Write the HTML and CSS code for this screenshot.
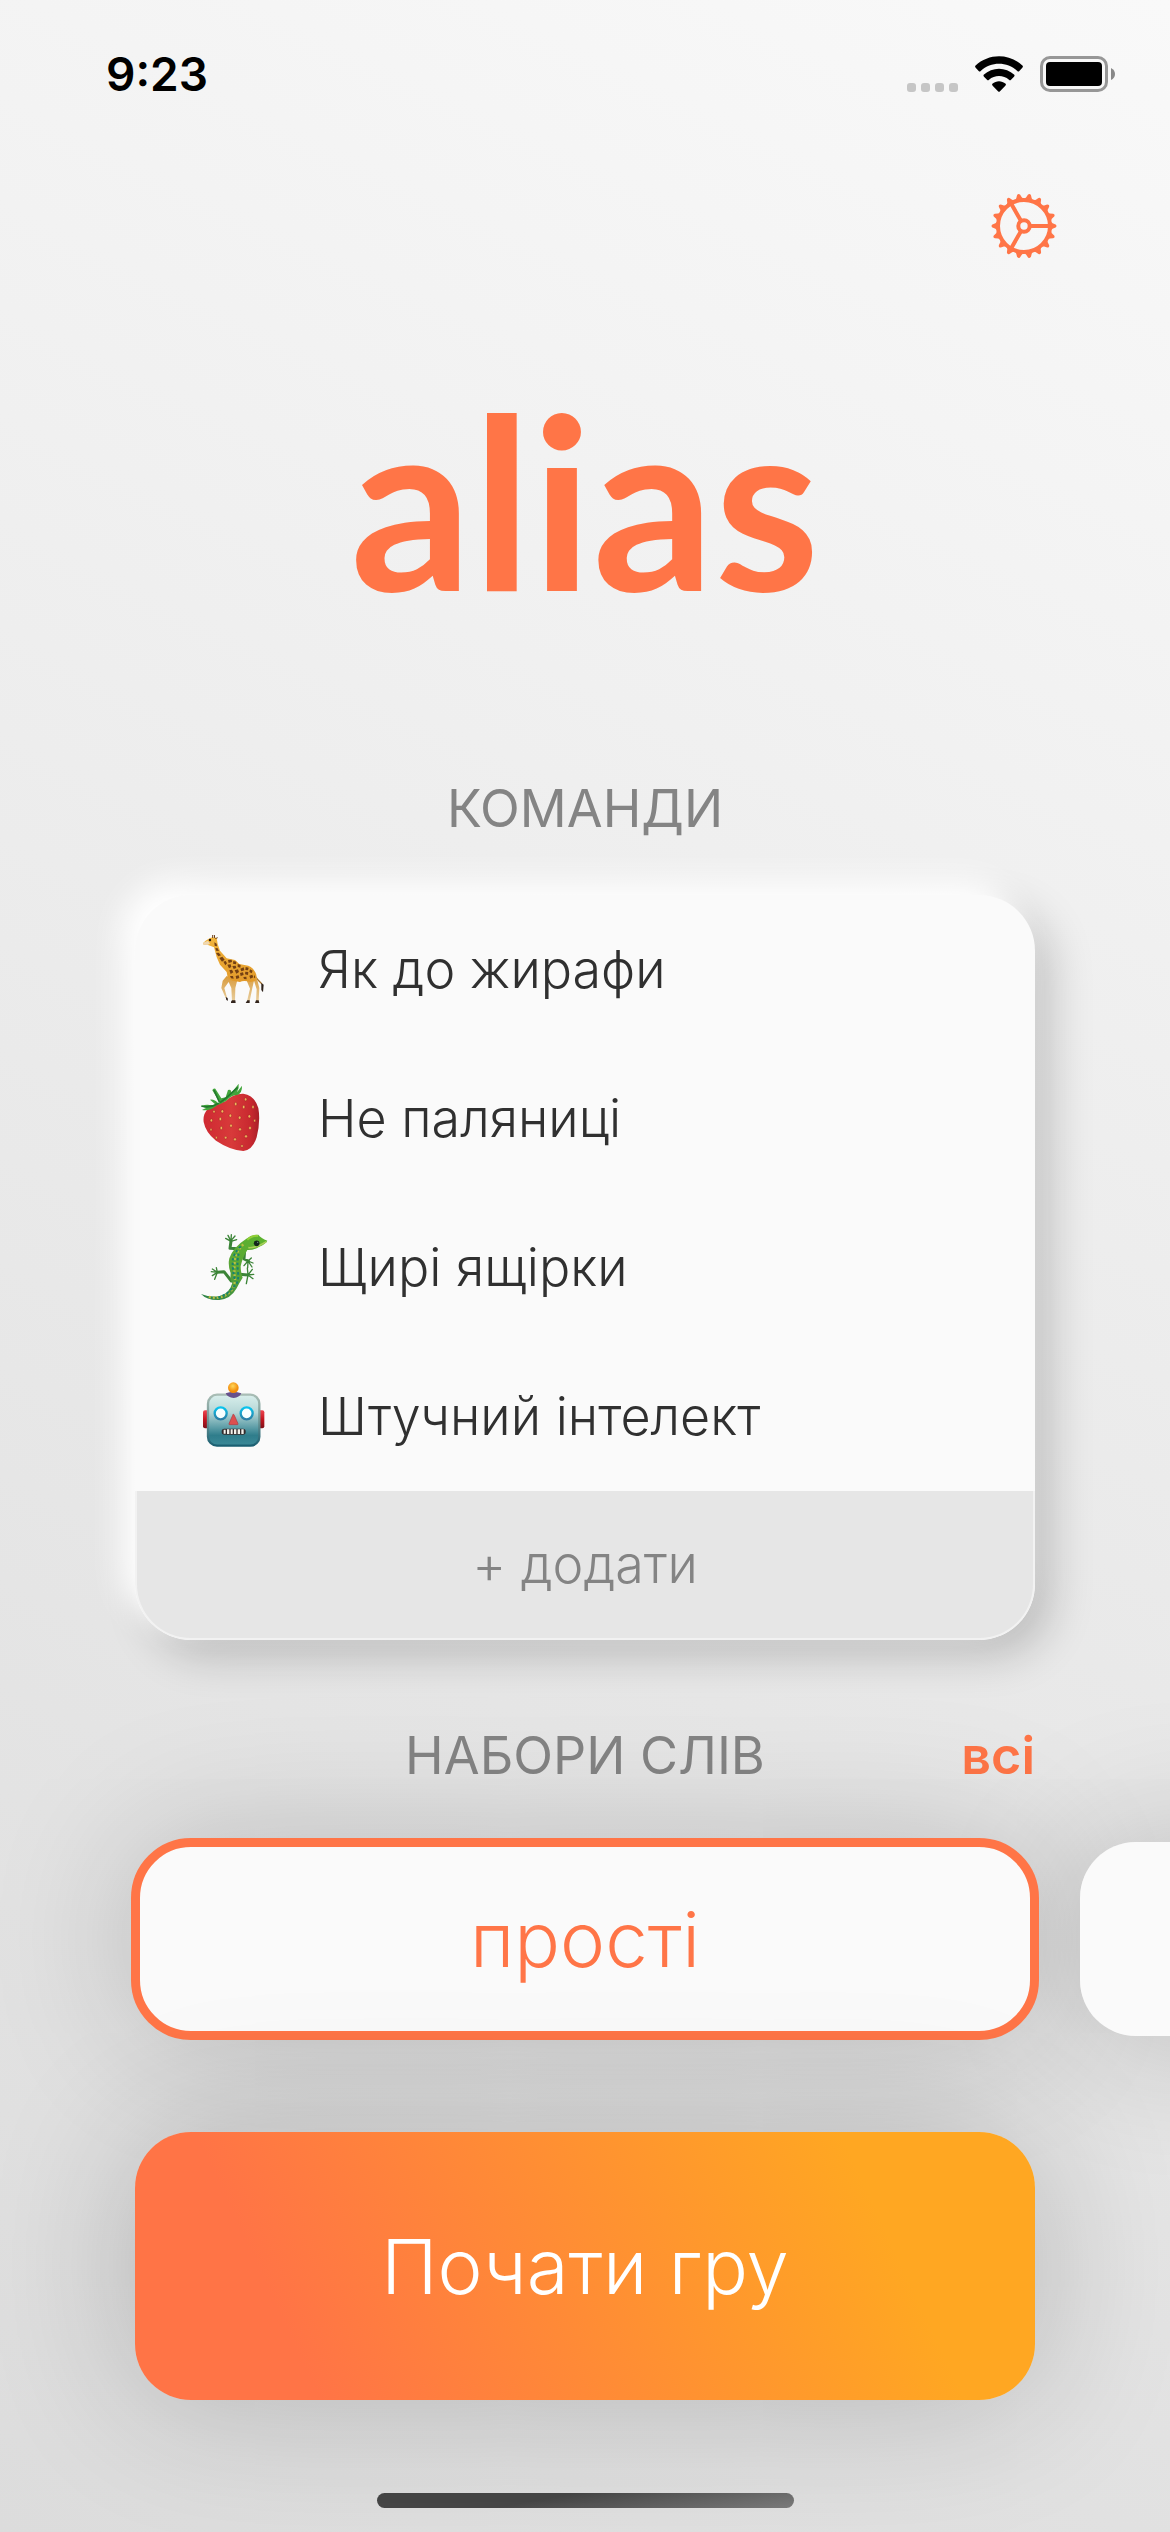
FILE: index.html
```html
<!DOCTYPE html>
<html lang="uk">
<head>
<meta charset="utf-8">
<meta name="viewport" content="width=device-width, initial-scale=1">
<title>alias</title>
<link rel="stylesheet" href="styles.css">
</head>
<body>
<div class="screen">
  <div class="status">
    <span class="time">9:23</span>
    <div class="indicators">
      <svg width="51" height="36" viewBox="0 0 51 36" fill="#c6c6c6" aria-hidden="true">
        <rect x="0" y="27" width="9" height="9" rx="3"/><rect x="14" y="27" width="9" height="9" rx="3"/><rect x="28" y="27" width="9" height="9" rx="3"/><rect x="42" y="27" width="9" height="9" rx="3"/>
      </svg>
      <svg width="48" height="36" viewBox="0 0 144 108" aria-hidden="true">
        <path d="M1 29Q-1 32 2 35L11 45Q14 48 17 45C48 16 96 16 127 45Q130 48 133 45L142 35Q145 32 143 29C103-9 41-9 1 29Z"/>
        <path d="M26 56Q24 59 27 62L36 71Q39 74 42 71C59 56 85 56 102 71Q105 74 108 71L117 62Q120 59 118 56C92 32 52 32 26 56Z"/>
        <path d="M52 83Q50 86 53 89L69 106Q72 109 75 106L91 89Q94 86 92 83C80 73 64 73 52 83Z"/>
      </svg>
      <svg width="75" height="36" viewBox="0 0 75 36" aria-hidden="true">
        <rect x="1.5" y="1.5" width="65" height="33" rx="8.5" fill="none" stroke="#979797" stroke-width="3"/>
        <rect x="6" y="6" width="56" height="24" rx="4"/>
        <path d="M71 12Q75 14 75 18T71 24Z" fill="#888"/>
      </svg>
    </div>
  </div>

  <header class="toolbar">
    <button class="settings" type="button" aria-label="Налаштування">
      <svg width="66" height="66" viewBox="-33 -33 66 66" fill="none" stroke="#ff7547" stroke-width="4" aria-hidden="true">
        <defs><path id="tooth" d="M27 -4.2L28.6 -2.8L31.6 -1.5Q33.4 0 31.6 1.5L28.6 2.8L27 4.2Z" fill="#ff7547" stroke="none"/></defs>
        <circle r="26"/><circle r="5.7"/>
        <path d="M7 0H25M-3.5 -6L-12.5 -21.7M-3.5 6L-12.5 21.7"/>
        <use href="#tooth"/><use href="#tooth" transform="rotate(20)"/><use href="#tooth" transform="rotate(40)"/><use href="#tooth" transform="rotate(60)"/><use href="#tooth" transform="rotate(80)"/><use href="#tooth" transform="rotate(100)"/><use href="#tooth" transform="rotate(120)"/><use href="#tooth" transform="rotate(140)"/><use href="#tooth" transform="rotate(160)"/><use href="#tooth" transform="rotate(180)"/><use href="#tooth" transform="rotate(200)"/><use href="#tooth" transform="rotate(220)"/><use href="#tooth" transform="rotate(240)"/><use href="#tooth" transform="rotate(260)"/><use href="#tooth" transform="rotate(280)"/><use href="#tooth" transform="rotate(300)"/><use href="#tooth" transform="rotate(320)"/><use href="#tooth" transform="rotate(340)"/>
      </svg>
    </button>
  </header>

  <main>
    <h1 class="logo">alias</h1>

    <section class="teams">
      <h2 class="heading">КОМАНДИ</h2>
      <div class="team-card">
        <ul class="team-list">
          <li class="team">
            <svg class="emoji" viewBox="54 100 216 216" aria-hidden="true">
              <defs>
                <linearGradient id="hide" x1="0" y1="0" x2="0" y2="1"><stop offset="0" stop-color="#f2b53c"/><stop offset="1" stop-color="#e29a2c"/></linearGradient>
                <linearGradient id="leg" x1="0" y1="0" x2="0" y2="1"><stop offset="0" stop-color="#d99a3a"/><stop offset="1" stop-color="#e8cfa0"/></linearGradient>
              </defs>
              <path d="M220 220Q234 240 246 250" fill="none" stroke="#a9742c" stroke-width="4"/>
              <path d="M244 247L251 252L249 275L244 268Z" fill="#2c211a"/>
              <path d="M198 235L210 264L201 302H209L217 262L222 240L230 266L228 302H236L238 262L228 222L205 225Z" fill="url(#leg)"/>
              <path d="M140 226L128 240L124 262L136 290L142 294L133 262L146 244L154 262L156 302H165L166 262L172 238Z" fill="url(#leg)"/>
              <path d="M98 110L110 112L113 130L120 150L140 173L165 178L178 190L205 195Q222 202 229 222L227 240L212 244Q190 238 180 244L158 240Q142 238 140 214L120 192Q108 170 102 140L84 133Q68 134 69 128Q82 114 98 110Z" fill="url(#hide)"/>
              <path d="M69 126L84 120L90 129L82 133L70 132Z" fill="#efd7b0"/>
              <path d="M98 103V112M103 103L104 112M106 114L113 111" stroke="#6a3d18" stroke-width="3"/>
              <circle cx="90" cy="118" r="3.6" fill="#21150e"/>
              <path d="M103 125l7 4 1 8-7-2zM106 142l7 1 4 8-9-1zM108 157l8-1 7 8-8 3zM118 172l9-4 7 9-8 6zM130 183l7-2 4 7-5 6zM144 178l11-1 1 7-10 3zM160 181l9 2-1 8-9-2zM142 192l10-1 2 8-7 4zM157 196l10-1 2 7-8 3zM173 190l9 3-1 8-8-2zM148 209l8-2 4 8-8 5zM164 209l10-3 3 8-8 5zM181 204l10-4 2 9-9 3zM197 199l9 2-2 8-8-1zM210 206l8 4-3 8-7-4zM180 217l9-2 2 8-9 3zM196 213l9 1-1 9-9-2zM150 226l9 0 2 8-8-1zM167 226l9-2 2 8-9 3zM190 229l9-1 1 8-8-1zM208 225l9-3 3 8-9 4zM222 222l4 8-4 3z" fill="#744013"/>
              <path d="M137 289l6 3 1 8-5-2zM153 303l3-4h10l1 8h-14zM197 307l5-8h7v8zM225 307l3-8h8l2 8z" fill="#31231c"/>
            </svg>
            <span>Як до жирафи</span>
          </li>
          <li class="team">
            <svg class="emoji" viewBox="54 547 216 216" aria-hidden="true">
              <defs><linearGradient id="berry" x1="0" y1="0" x2="1" y2="0"><stop offset="0" stop-color="#cf2932"/><stop offset=".5" stop-color="#d83a3a"/><stop offset=".85" stop-color="#c8282f"/><stop offset="1" stop-color="#a81f28"/></linearGradient></defs>
              <path d="M84 624Q68 640 71 664Q77 696 108 720Q150 748 190 751Q218 748 230 710Q242 662 235 622Q224 584 190 579Q160 578 134 603Q106 607 84 624Z" fill="url(#berry)"/>
              <path d="M64 616Q78 610 90 613L108 613L90 597Q104 595 114 608L118 604L97 569Q99 562 106 564L124 593L137 590L144 568Q154 564 154 577L176 549Q178 564 171 575L186 555Q187 576 172 583Q156 584 145 594Q134 606 112 613Q92 632 66 628L78 622Z" fill="#42a63c"/>
              <path d="M64 616Q90 624 116 608M120 606L138 592L173 560M118 604L102 568" fill="none" stroke="#23792d" stroke-width="5"/>
              <g fill="#f0b75b" stroke="#9c1d24" stroke-width="1.5">
                <ellipse cx="127" cy="632" rx="4" ry="5"/><ellipse cx="167" cy="610" rx="4" ry="5"/><ellipse cx="197" cy="596" rx="3.5" ry="5"/><ellipse cx="191" cy="619" rx="4" ry="5"/><ellipse cx="219" cy="619" rx="3.5" ry="5"/><ellipse cx="102" cy="633" rx="3.5" ry="4"/><ellipse cx="94" cy="659" rx="3.5" ry="5"/><ellipse cx="121" cy="655" rx="4" ry="5"/><ellipse cx="151" cy="645" rx="4" ry="5"/><ellipse cx="179" cy="651" rx="4" ry="5"/><ellipse cx="208" cy="647" rx="4" ry="5"/><ellipse cx="124" cy="682" rx="4" ry="5"/><ellipse cx="153" cy="675" rx="4" ry="5"/><ellipse cx="180" cy="686" rx="4" ry="5"/><ellipse cx="210" cy="682" rx="4" ry="5"/><ellipse cx="137" cy="711" rx="4" ry="4"/><ellipse cx="165" cy="716" rx="4" ry="5"/><ellipse cx="198" cy="707" rx="4" ry="5"/><ellipse cx="186" cy="736" rx="4" ry="4"/><ellipse cx="109" cy="711" rx="3" ry="4"/><ellipse cx="224" cy="660" rx="3" ry="4"/><ellipse cx="93" cy="687" rx="3" ry="4"/>
              </g>
            </svg>
            <span>Не паляниці</span>
          </li>
          <li class="team">
            <svg class="emoji" viewBox="54 95 216 216" aria-hidden="true">
              <defs><linearGradient id="skin" x1="1" y1="0" x2="0" y2="1"><stop offset="0" stop-color="#5cb52d"/><stop offset=".5" stop-color="#5aa636"/><stop offset="1" stop-color="#2b8049"/></linearGradient></defs>
              <g fill="none" stroke="#3b8437" stroke-linecap="round" stroke-linejoin="round">
                <path d="M186 146L150 144L153 122M194 150L192 176L205 182M154 242L132 214L112 216M174 240L178 222L204 224" stroke-width="9"/>
                <path d="M153 123L137 114M153 123L144 105M153 121L154 103M153 121L165 107M153 123L170 118M204 182L192 196M204 182L203 202M204 182L216 200M204 182L219 188M204 182L214 173M112 216L97 206M112 216L94 214M112 216L97 226M112 216L104 237M112 216L109 202M204 224L202 203M204 224L217 207M204 224L221 222M204 224L219 235M204 224L199 250" stroke-width="4"/>
              </g>
              <path d="M198 116Q214 103 235 103Q243 113 262 121Q256 132 238 139Q220 150 202 149Q188 170 182 198Q182 216 188 232Q176 250 170 264Q152 296 118 299Q82 301 63 281Q92 292 119 287Q148 280 157 248L151 236L152 218Q143 194 148 174Q160 140 198 116Z" fill="url(#skin)"/>
              <path d="M190 132Q166 156 164 184T165 236Q164 270 138 284T82 288" fill="none" stroke="#b9bd43" stroke-width="7" stroke-dasharray="6 6"/>
              <path d="M182 138Q158 162 158 186T164 236M176 160Q170 180 174 216T158 260Q144 284 112 292" fill="none" stroke="#17826f" stroke-width="6" stroke-dasharray="7 7"/>
              <path d="M202 118Q220 104 234 107" fill="none" stroke="#92cf38" stroke-width="6"/>
              <path d="M205 142Q228 144 259 124" fill="none" stroke="#a9cf58" stroke-width="5"/>
              <circle cx="230" cy="129" r="8.5" fill="#13251b"/><circle cx="233" cy="126" r="2" fill="#759b8b"/>
            </svg>
            <span>Щирі ящірки</span>
          </li>
          <li class="team">
            <svg class="emoji" viewBox="54 541 216 216" aria-hidden="true">
              <defs>
                <linearGradient id="metal" x1="0" y1="0" x2="0" y2="1"><stop offset="0" stop-color="#d9efec"/><stop offset=".35" stop-color="#b5d6d6"/><stop offset=".65" stop-color="#5b9ca6"/><stop offset=".8" stop-color="#2f7d8b"/><stop offset="1" stop-color="#3b8998"/></linearGradient>
                <linearGradient id="rim" x1="0" y1="0" x2="0" y2="1"><stop offset="0" stop-color="#a9bdb5"/><stop offset=".5" stop-color="#6f9695"/><stop offset="1" stop-color="#1a5f72"/></linearGradient>
                <radialGradient id="bulb" cx=".45" cy=".35"><stop offset="0" stop-color="#ffd75a"/><stop offset="1" stop-color="#f28d0b"/></radialGradient>
                <linearGradient id="ear" x1="0" y1="0" x2="0" y2="1"><stop offset="0" stop-color="#ee4550"/><stop offset=".5" stop-color="#c4141f"/><stop offset="1" stop-color="#7d1119"/></linearGradient>
                <linearGradient id="eye" x1="0" y1="0" x2="0" y2="1"><stop offset="0" stop-color="#08c4ee"/><stop offset="1" stop-color="#2c7da4"/></linearGradient>
              </defs>
              <rect x="69" y="629" width="20" height="54" rx="6" fill="url(#ear)"/><rect x="233" y="629" width="20" height="54" rx="6" fill="url(#ear)"/>
              <rect x="84" y="582" width="154" height="153" rx="27" fill="url(#metal)" stroke="url(#rim)" stroke-width="7"/>
              <path d="M137 578Q160 568 184 578Q178 591 161 592Q143 591 137 578Z" fill="#67518c"/>
              <circle cx="160" cy="561" r="16" fill="url(#bulb)"/>
              <g fill="#f7ffff" stroke="url(#eye)" stroke-width="7"><circle cx="122" cy="638" r="18"/><circle cx="200" cy="638" r="18"/></g>
              <path d="M160 641Q162 641 163 644L174 669Q175 672 172 672H149Q146 672 147 669L158 644Q158 641 160 641Z" fill="#dd4f4f" stroke="#ad3942" stroke-width="2"/>
              <rect x="125" y="684" width="72" height="18" rx="8" fill="#332c2c"/>
              <path d="M131 687h6v12h-6zM141 686h7v14h-7zM152 686h6v14h-6zM162 686h7v14h-7zM173 686h7v14h-7zM184 686h7v14h-7z" fill="#f2f1ea"/>
            </svg>
            <span>Штучний інтелект</span>
          </li>
        </ul>
        <button class="add" type="button">+ додати</button>
      </div>
    </section>

    <section class="sets">
      <div class="set-head">
        <h2 class="heading">НАБОРИ СЛІВ</h2>
        <a class="all" href="#">всі</a>
      </div>
      <div class="set-row">
        <button class="set set-selected" type="button" aria-pressed="true">прості</button>
        <button class="set" type="button" aria-label="Наступний набір"></button>
      </div>
    </section>

    <button class="start" type="button">Почати гру</button>
  </main>
  <div class="home"></div>
</div>
</body>
</html>
```
FILE: styles.css
```css
* {
  box-sizing: border-box;
}

body {
  margin: 0;
  font-family: Inter, "Liberation Sans", sans-serif;
  font-size: 52px;
  font-weight: 300;
  line-height: 60px;
  color: #303030;
}

button {
  padding: 0;
  border: 0;
  background: none;
  font: inherit;
  color: inherit;
  cursor: pointer;
}

svg {
  display: block;
}

.screen {
  display: flex;
  flex-direction: column;
  min-height: 100vh;
  overflow: hidden;
  background: linear-gradient(205deg, #f9f9f9, #dcdcdc);
}

.status {
  display: flex;
  align-items: center;
  justify-content: space-between;
  height: 148px;
  padding: 0 55px 0 106px;
}

.time {
  font-size: 46px;
  font-weight: 600;
  color: #000;
}

.indicators {
  display: flex;
  gap: 17px;
}

.toolbar {
  display: flex;
  justify-content: flex-end;
  padding: 45px 113px 0;
}

main {
  display: flex;
  flex-direction: column;
  padding: 0 135px;
}

.logo {
  margin: 99px 0 141px;
  font-family: Lato, sans-serif;
  font-size: 240px;
  font-weight: 700;
  line-height: 280px;
  text-align: center;
  color: #ff7547;
}

.heading {
  margin: 0;
  font-size: 52px;
  font-weight: 400;
  text-align: center;
  color: #848484;
}

.team-card {
  margin-top: 56px;
  overflow: hidden;
  border-radius: 56px;
  background: #fafafa;
  box-shadow: -15px -15px 30px #fff, 15px 15px 45px rgba(0, 0, 0, 0.2);
}

.team-list {
  margin: 0;
  padding: 0;
  list-style: none;
}

.team {
  display: flex;
  align-items: center;
  gap: 48px;
  height: 149px;
  padding: 0 63px;
}

.emoji {
  width: 72px;
  height: 72px;
}

.add {
  display: block;
  width: 100%;
  height: 149px;
  border: 2px solid #f2f2f2;
  border-top: 0;
  border-radius: 0 0 56px 56px;
  background: #e6e6e6;
  color: #848484;
}

.set-head {
  display: grid;
  grid-template-columns: 1fr auto 1fr;
  margin-top: 86px;
}

.set-head .heading {
  grid-column: 2;
}

.all {
  justify-self: end;
  font-weight: 600;
  text-decoration: none;
  color: #ff7547;
}

.set-row {
  position: relative;
  z-index: 0;
  display: flex;
  gap: 45px;
  margin-top: 56px;
}

.set {
  position: relative;
  flex: 0 0 100%;
  height: 194px;
  border-radius: 56px;
  background: #fafafa;
  font-size: 76px;
  color: #ff7547;
}

/* The shadow sits below both cards, so neither one darkens its neighbour. */
.set::before {
  content: "";
  position: absolute;
  inset: 0;
  z-index: -1;
  border-radius: inherit;
  box-shadow: 0 0 150px rgba(0, 0, 0, 0.2);
}

.set-selected {
  outline: 9px solid #ff7547;
  outline-offset: -5px;
}

.start {
  position: relative;
  height: 268px;
  margin-top: 96px;
  border-radius: 56px;
  background: linear-gradient(65deg, #ff7446 18%, #ffa722 81%);
  box-shadow: 0 0 150px rgba(0, 0, 0, 0.2);
  font-size: 76px;
  color: #fff;
}

.home {
  align-self: center;
  width: 417px;
  height: 15px;
  margin: 93px 0 24px;
  border-radius: 8px;
  background: linear-gradient(170deg, #464646 40%, #7c7c7c);
}
```
